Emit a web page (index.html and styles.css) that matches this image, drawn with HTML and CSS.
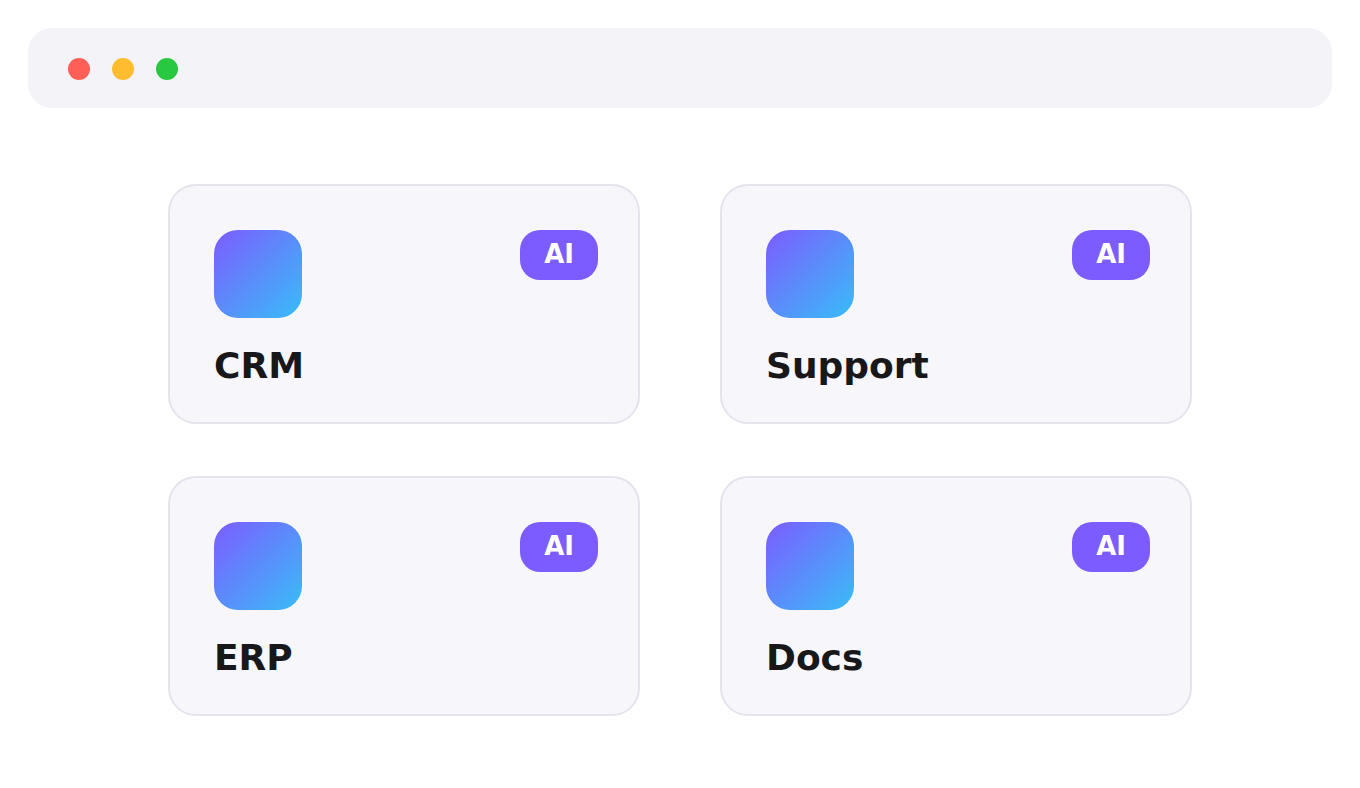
FILE: index.html
```html
<!DOCTYPE html>
<html lang="en">
<head>
    <meta charset="UTF-8">
    <meta name="viewport" content="width=device-width, initial-scale=1.0">
    <title>Apps</title>
    <link rel="stylesheet" href="styles.css">
</head>

<body>
    <header class="title-bar">
        <span class="dot red"></span>
        <span class="dot yellow"></span>
        <span class="dot green"></span>
    </header>

    <main class="app-grid">
        <div class="app-card">
            <div class="card-top">
                <div class="app-icon"></div>
                <span class="badge">AI</span>
            </div>
            <h2>CRM</h2>
        </div>
        <div class="app-card">
            <div class="card-top">
                <div class="app-icon"></div>
                <span class="badge">AI</span>
            </div>
            <h2>Support</h2>
        </div>
        <div class="app-card">
            <div class="card-top">
                <div class="app-icon"></div>
                <span class="badge">AI</span>
            </div>
            <h2>ERP</h2>
        </div>
        <div class="app-card">
            <div class="card-top">
                <div class="app-icon"></div>
                <span class="badge">AI</span>
            </div>
            <h2>Docs</h2>
        </div>
    </main>
</body>
</html>
```

FILE: styles.css
```css
* {
    box-sizing: border-box;
}

body {
    margin: 0;
    padding: 28px;
    background: #fff;
    color: #18181b;
    font-family: "DejaVu Sans", sans-serif;
}

/* Window bar with the three dots */
.title-bar {
    display: flex;
    gap: 22px;
    padding: 30px 40px 28px;
    background: #f3f3f8;
    border-radius: 24px;
}

.dot {
    width: 22px;
    height: 22px;
    border-radius: 50%;
}

.red {
    background: #ff5f57;
}

.yellow {
    background: #febc2e;
}

.green {
    background: #28c840;
}

.app-grid {
    display: grid;
    grid-template-columns: 1fr 1fr;
    gap: 52px 80px;
    padding: 76px 140px 44px;
}

.app-card {
    padding: 44px 40px 34px 44px;
    background: #f7f7fb;
    border: 2px solid #e4e3ee;
    border-radius: 28px;
}

.card-top {
    display: flex;
    justify-content: space-between;
    align-items: flex-start;
}

.app-icon {
    width: 88px;
    height: 88px;
    border-radius: 24px;
    background: linear-gradient(135deg, #7c5cff, #38bdf8);
}

.badge {
    padding: 8px 24px 10px;
    background: #7c5cff;
    color: #fff;
    font-size: 26px;
    font-weight: bold;
    line-height: 32px;
    border-radius: 20px;
}

.app-card h2 {
    margin: 26px 0 0;
    font-size: 36px;
    line-height: 44px;
}

@media (max-width: 900px) {
    .app-grid {
        grid-template-columns: 1fr;
        padding: 52px 0 0;
    }
}
```
